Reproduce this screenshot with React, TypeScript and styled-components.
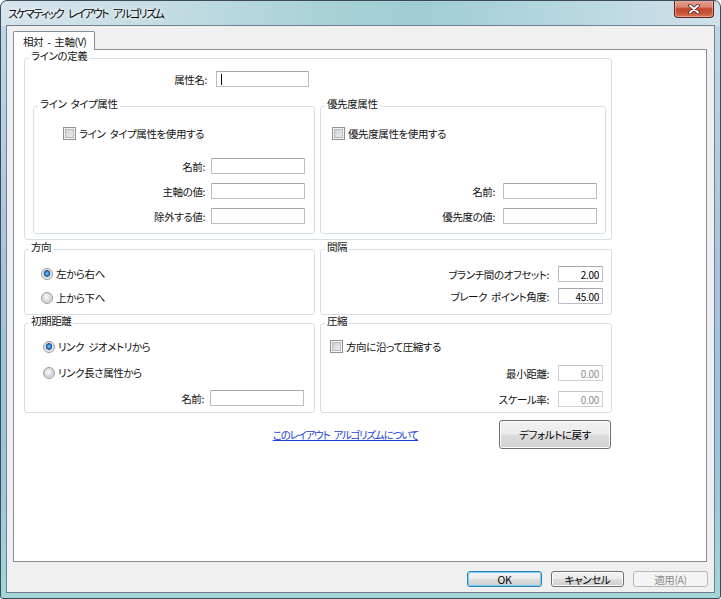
import React from 'react';
import styled, { createGlobalStyle } from 'styled-components';

const Global = createGlobalStyle`
  html, body { margin: 0; padding: 0; background: #ffffff; }
  body {
    font-family: "Noto Sans CJK JP", "Noto Sans", sans-serif;
    font-size: 10.5px;
    line-height: 13px;
    letter-spacing: -0.4px;
    word-spacing: 2px;
    color: #111;
    font-feature-settings: "palt";
  }
  * { box-sizing: border-box; }
`;

const Window = styled.div`
  width: 721px;
  height: 599px;
  border: 1px solid #3d4b57;
  border-radius: 7px 7px 3px 3px;
  background:
    linear-gradient(90deg, #d6e4ec 0%, #c6dde5 20%, #a9d1d7 45%, #9fcdd4 58%, #b6d6e0 78%, #d0e1ea 100%) top / 100% 25px no-repeat,
    linear-gradient(180deg, #c2d8e6 0%, #a6c4df 45%, #9cc3dc 75%, #a3d6d7 100%);
  display: flex;
  flex-direction: column;
  padding: 0 5px 5px 5px;
  overflow: hidden;
`;

const TitleBar = styled.div`
  height: 24px;
  flex: none;
  display: flex;
  align-items: center;
  justify-content: space-between;
  padding-left: 2px;
`;

const Title = styled.span`
  font-size: 11px;
  line-height: 14px;
  letter-spacing: -1.6px;
  word-spacing: 4px;
  color: #000;
  text-shadow: 0 0 6px rgba(255, 255, 255, 0.95), 0 0 3px rgba(255, 255, 255, 0.9);
`;

const CloseButton = styled.div`
  align-self: flex-start;
  margin-top: -1px;
  margin-right: 1px;
  width: 40px;
  height: 18px;
  border: 1px solid #5a2a22;
  border-top: none;
  border-radius: 0 0 4px 4px;
  background: linear-gradient(180deg, #e9a99b 0%, #d9806c 42%, #c4442c 52%, #c9573d 80%, #d97b5c 100%);
  box-shadow: inset 0 0 0 1px rgba(255, 210, 200, 0.45);
  display: flex;
  align-items: center;
  justify-content: center;
`;

const Client = styled.div`
  flex: 1;
  background: #f0f0f0;
  border: 1px solid #6f7f8d;
  display: flex;
  flex-direction: column;
  padding: 5px 6px 5px 6px;
`;

const TabStrip = styled.div`
  display: flex;
  flex: none;
`;

const Tab = styled.div`
  position: relative;
  z-index: 1;
  width: 82px;
  height: 19px;
  margin-bottom: -1px;
  background: #fff;
  border: 1px solid #898c95;
  border-bottom: none;
  border-radius: 2px 2px 0 0;
  padding-left: 9px;
  display: flex;
  align-items: center;
  white-space: nowrap;
`;

const Panel = styled.div`
  flex: 1;
  margin-right: 1px;
  background: #fff;
  border: 1px solid #898c95;
  padding: 0 0 0 10px;
`;

const Column = styled.div`
  width: 588px;
  display: flex;
  flex-direction: column;
`;

const Group = styled.fieldset<{ $mt?: number }>`
  margin: ${(p) => p.$mt ?? 0}px 0 0 0;
  padding: 0;
  min-width: 0;
  border: 1px solid #d5dfe5;
  border-radius: 3px;
  display: flex;
  flex-direction: column;
`;

const Legend = styled.legend`
  margin-left: 4px;
  padding: 0 2px 4px;
  font-size: 10.5px;
  line-height: 12px;
  white-space: nowrap;
`;

const GroupBody = styled.div<{ $pad: string }>`
  flex: 1;
  display: flex;
  flex-direction: column;
  padding: ${(p) => p.$pad};
`;

const InnerGrid = styled.div`
  display: grid;
  grid-template-columns: 282px 1fr;
  column-gap: 5px;
  margin-top: 11px;
`;

const SectionGrid = styled.div<{ $mt: number }>`
  display: grid;
  grid-template-columns: 291px 1fr;
  column-gap: 5px;
  margin-top: ${(p) => p.$mt}px;
`;

const FieldStack = styled.div<{ $gap: number; $mt?: string }>`
  display: flex;
  flex-direction: column;
  gap: ${(p) => p.$gap}px;
  margin-top: ${(p) => p.$mt ?? '0'};
`;

const FieldRow = styled.div<{ $gap?: number; $pr?: number; $w?: number; $mt?: number }>`
  display: flex;
  align-items: center;
  justify-content: flex-end;
  height: 16px;
  gap: ${(p) => p.$gap ?? 6}px;
  padding-right: ${(p) => p.$pr ?? 0}px;
  margin-top: ${(p) => p.$mt ?? 0}px;
  width: ${(p) => (p.$w ? `${p.$w}px` : 'auto')};
`;

const Label = styled.span`
  white-space: nowrap;
  line-height: 13px;
`;

const TextBox = styled.div<{ $w: number; $num?: boolean; $disabled?: boolean }>`
  width: ${(p) => p.$w}px;
  height: 16px;
  flex: none;
  background: #fff;
  border: 1px solid ${(p) => (p.$disabled ? '#cdd0d4' : '#b9bdc4')};
  border-top-color: ${(p) => (p.$disabled ? '#c2c5ca' : '#a3a7ae')};
  border-radius: 1px;
  display: flex;
  align-items: center;
  justify-content: ${(p) => (p.$num ? 'flex-end' : 'flex-start')};
  padding: 0 3px;
  font-size: 10px;
  letter-spacing: -0.3px;
  color: ${(p) => (p.$disabled ? '#8d8d8d' : '#000')};
  white-space: nowrap;
`;

const Caret = styled.span`
  width: 1px;
  height: 11px;
  background: #000;
  margin-left: 1px;
`;

const ChoiceRow = styled.div<{ $mt?: number; $indent: number }>`
  display: flex;
  align-items: center;
  gap: 3px;
  height: 13px;
  margin-top: ${(p) => p.$mt ?? 0}px;
  padding-left: ${(p) => p.$indent}px;
  white-space: nowrap;
`;

const CheckBox = styled.span`
  width: 13px;
  height: 13px;
  flex: none;
  border: 1px solid #8e8f8f;
  background: linear-gradient(135deg, #c8cbd0 0%, #e0e1e4 55%, #f2f2f2 100%);
  box-shadow: inset 0 0 0 1px #f5f5f5, inset 0 0 0 2px #b7b9bd;
`;

const Radio = styled.span<{ $checked?: boolean }>`
  width: 12px;
  height: 12px;
  flex: none;
  border-radius: 50%;
  border: 1px solid #9a9c9f;
  background: ${(p) =>
    p.$checked
      ? 'radial-gradient(circle at 50% 45%, #9ad6f8 0px, #3a86cc 1.6px, #1d5597 3px, #dcdee1 3.6px, #f3f3f3 100%)'
      : 'radial-gradient(circle at 45% 40%, #fafafa 0px, #e6e7e9 2.5px, #d3d5d8 4.5px, #f0f0f0 100%)'};
`;

const Link = styled.a`
  color: #1c3fd6;
  text-decoration: underline;
  letter-spacing: -1.2px;
  word-spacing: 3px;
  white-space: nowrap;
  cursor: pointer;
`;

const ActionRow = styled.div`
  display: flex;
  align-items: center;
  justify-content: flex-end;
  gap: 81px;
  margin-top: 7px;
  padding-right: 1px;
`;

const PushButton = styled.button<{ $w: number; $h: number; $variant?: 'default' | 'disabled' }>`
  width: ${(p) => p.$w}px;
  height: ${(p) => p.$h}px;
  margin: 0;
  padding: 0;
  font-family: inherit;
  font-size: 10.5px;
  line-height: 13px;
  letter-spacing: -0.4px;
  font-feature-settings: "palt";
  border-radius: 3px;
  border: 1px solid ${(p) => (p.$variant === 'default' ? '#3c7fb1' : p.$variant === 'disabled' ? '#b5b9bc' : '#707070')};
  color: ${(p) => (p.$variant === 'disabled' ? '#8b8b8b' : '#000')};
  background: ${(p) =>
    p.$variant === 'disabled'
      ? '#f4f4f4'
      : 'linear-gradient(180deg, #f2f2f2 0%, #ebebeb 48%, #dddddd 52%, #cfcfcf 100%)'};
  box-shadow: ${(p) =>
    p.$variant === 'default'
      ? 'inset 0 0 0 1px #6ed2f7'
      : p.$variant === 'disabled'
      ? 'none'
      : 'inset 0 0 0 1px #fbfbfb'};
  display: flex;
  align-items: center;
  justify-content: center;
`;

const BottomBar = styled.div`
  display: flex;
  justify-content: flex-end;
  gap: 9px;
  margin-top: 9px;
  padding-right: 0;
  flex: none;
`;

export default function App() {
  return (
    <>
      <Global />
      <Window>
        <TitleBar>
          <Title>スケマティック レイアウト アルゴリズム</Title>
          <CloseButton>
            <svg width="12" height="10" viewBox="0 0 12 10">
              <path d="M2 1.5 L10 8.5 M10 1.5 L2 8.5" stroke="#4a1f18" strokeWidth="3.6" strokeLinecap="round" />
              <path d="M2 1.5 L10 8.5 M10 1.5 L2 8.5" stroke="#ffffff" strokeWidth="2" strokeLinecap="round" />
            </svg>
          </CloseButton>
        </TitleBar>
        <Client>
          <TabStrip>
            <Tab>相対 - 主軸(V)</Tab>
          </TabStrip>
          <Panel>
            <Column>
              <Group>
                <Legend>ラインの定義</Legend>
                <GroupBody $pad="5px 5px 5px 8px">
                  <FieldRow $w={282} $pr={6} $gap={9}>
                    <Label>属性名:</Label>
                    <TextBox $w={93}>
                      <Caret />
                    </TextBox>
                  </FieldRow>
                  <InnerGrid>
                    <Group>
                      <Legend>ライン タイプ属性</Legend>
                      <GroupBody $pad="13px 9px 9px 0">
                        <ChoiceRow $indent={29}>
                          <CheckBox />
                          <span>ライン タイプ属性を使用する</span>
                        </ChoiceRow>
                        <FieldStack $gap={9} $mt="18px">
                          <FieldRow>
                            <Label>名前:</Label>
                            <TextBox $w={94} />
                          </FieldRow>
                          <FieldRow>
                            <Label>主軸の値:</Label>
                            <TextBox $w={94} />
                          </FieldRow>
                          <FieldRow>
                            <Label>除外する値:</Label>
                            <TextBox $w={94} />
                          </FieldRow>
                        </FieldStack>
                      </GroupBody>
                    </Group>
                    <Group>
                      <Legend>優先度属性</Legend>
                      <GroupBody $pad="13px 8px 9px 0">
                        <ChoiceRow $indent={11}>
                          <CheckBox />
                          <span>優先度属性を使用する</span>
                        </ChoiceRow>
                        <FieldStack $gap={9} $mt="auto">
                          <FieldRow $gap={8}>
                            <Label>名前:</Label>
                            <TextBox $w={94} />
                          </FieldRow>
                          <FieldRow $gap={8}>
                            <Label>優先度の値:</Label>
                            <TextBox $w={94} />
                          </FieldRow>
                        </FieldStack>
                      </GroupBody>
                    </Group>
                  </InnerGrid>
                </GroupBody>
              </Group>

              <SectionGrid $mt={1}>
                <Group>
                  <Legend>方向</Legend>
                  <GroupBody $pad="10px 0 10px 16px">
                    <ChoiceRow $indent={0}>
                      <Radio $checked />
                      <span>左から右へ</span>
                    </ChoiceRow>
                    <ChoiceRow $indent={0} $mt={11}>
                      <Radio />
                      <span>上から下へ</span>
                    </ChoiceRow>
                  </GroupBody>
                </Group>
                <Group>
                  <Legend>間隔</Legend>
                  <GroupBody $pad="9px 8px 10px 0">
                    <FieldStack $gap={6}>
                      <FieldRow $gap={9}>
                        <Label>ブランチ間のオフセット:</Label>
                        <TextBox $w={45} $num>2.00</TextBox>
                      </FieldRow>
                      <FieldRow $gap={9}>
                        <Label>ブレーク ポイント角度:</Label>
                        <TextBox $w={45} $num>45.00</TextBox>
                      </FieldRow>
                    </FieldStack>
                  </GroupBody>
                </Group>
              </SectionGrid>

              <SectionGrid $mt={0}>
                <Group>
                  <Legend>初期距離</Legend>
                  <GroupBody $pad="9px 10px 6px 18px">
                    <ChoiceRow $indent={0}>
                      <Radio $checked />
                      <span>リンク ジオメトリから</span>
                    </ChoiceRow>
                    <ChoiceRow $indent={0} $mt={13}>
                      <Radio />
                      <span>リンク長さ属性から</span>
                    </ChoiceRow>
                    <FieldRow $mt={11}>
                      <Label>名前:</Label>
                      <TextBox $w={94} />
                    </FieldRow>
                  </GroupBody>
                </Group>
                <Group>
                  <Legend>圧縮</Legend>
                  <GroupBody $pad="9px 8px 5px 9px">
                    <ChoiceRow $indent={0}>
                      <CheckBox />
                      <span>方向に沿って圧縮する</span>
                    </ChoiceRow>
                    <FieldStack $gap={10} $mt="12px">
                      <FieldRow $gap={9}>
                        <Label>最小距離:</Label>
                        <TextBox $w={45} $num $disabled>0.00</TextBox>
                      </FieldRow>
                      <FieldRow $gap={9}>
                        <Label>スケール率:</Label>
                        <TextBox $w={45} $num $disabled>0.00</TextBox>
                      </FieldRow>
                    </FieldStack>
                  </GroupBody>
                </Group>
              </SectionGrid>

              <ActionRow>
                <Link>このレイアウト アルゴリズムについて</Link>
                <PushButton $w={112} $h={29}>デフォルトに戻す</PushButton>
              </ActionRow>
            </Column>
          </Panel>
          <BottomBar>
            <PushButton $w={75} $h={16} $variant="default">OK</PushButton>
            <PushButton $w={73} $h={16}>キャンセル</PushButton>
            <PushButton $w={75} $h={16} $variant="disabled">適用(A)</PushButton>
          </BottomBar>
        </Client>
      </Window>
    </>
  );
}
